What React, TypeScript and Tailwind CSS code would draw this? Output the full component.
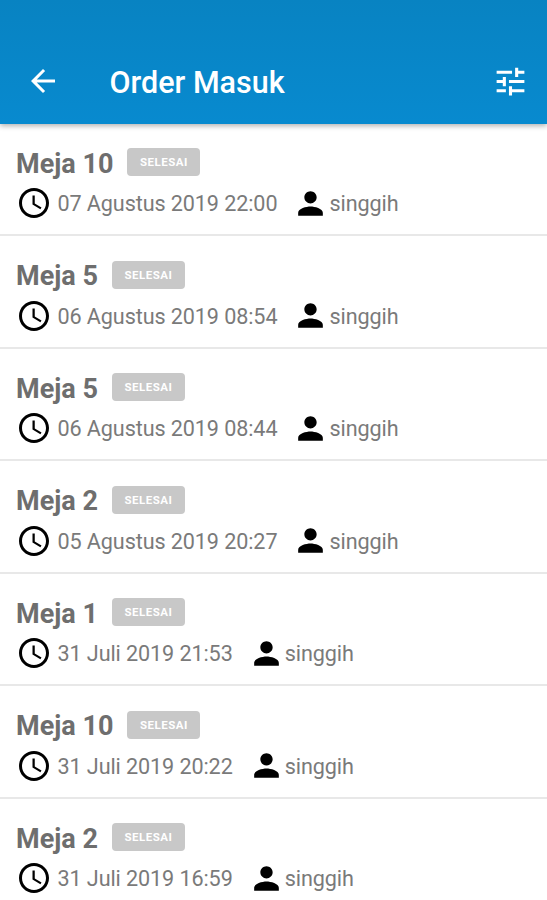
type Order = { table: string; date: string; user: string };

const orders: Order[] = [
  { table: "Meja 10", date: "07 Agustus 2019 22:00", user: "singgih" },
  { table: "Meja 5", date: "06 Agustus 2019 08:54", user: "singgih" },
  { table: "Meja 5", date: "06 Agustus 2019 08:44", user: "singgih" },
  { table: "Meja 2", date: "05 Agustus 2019 20:27", user: "singgih" },
  { table: "Meja 1", date: "31 Juli 2019 21:53", user: "singgih" },
  { table: "Meja 10", date: "31 Juli 2019 20:22", user: "singgih" },
  { table: "Meja 2", date: "31 Juli 2019 16:59", user: "singgih" },
];

function Icon({ d, className }: { d: string; className: string }) {
  return (
    <svg viewBox="0 0 24 24" fill="currentColor" className={className} aria-hidden="true">
      <path d={d} />
    </svg>
  );
}

const BACK = "M20 11H7.83l5.59-5.59L12 4l-8 8 8 8 1.41-1.41L7.83 13H20v-2z";
const TUNE =
  "M3 17v2h6v-2H3zM3 5v2h10V5H3zm10 16v-2h8v-2h-8v-2h-2v6h2zM7 9v2H3v2h4v2h2V9H7zm14 4v-2H11v2h10zm-6-4h2V7h4V5h-4V3h-2v6z";
const CLOCK =
  "M11.99 2C6.47 2 2 6.48 2 12s4.47 10 9.99 10C17.52 22 22 17.52 22 12S17.52 2 11.99 2zM12 20c-4.42 0-8-3.58-8-8s3.58-8 8-8 8 3.58 8 8-3.58 8-8 8zm.5-13H11v6l5.25 3.15.75-1.23-4.5-2.67z";
const PERSON =
  "M12 12c2.21 0 4-1.79 4-4s-1.79-4-4-4-4 1.79-4 4 1.79 4 4 4zm0 2c-2.67 0-8 1.34-8 4v2h16v-2c0-2.66-5.33-4-8-4z";

function OrderRow({ table, date, user }: Order) {
  return (
    <li className="h-[112.5px] border-b-2 border-[#e8e8e8] px-4 pt-[24.6px]">
      <div className="flex h-7 items-center">
        <span className="pt-[3px] text-[27px] leading-7 font-bold text-[#6e6e6e]">{table}</span>
        <span className="ml-3.5 flex h-7 w-[73px] items-center justify-center rounded-[4px] bg-[#c8c8c8] pt-[2px] text-[11.5px] font-bold tracking-[0.5px] text-white">
          SELESAI
        </span>
      </div>
      <div className="mt-[9px] flex h-9 items-center text-[21.6px] tracking-[-0.1px] text-[#7a7a7a]">
        <Icon d={CLOCK} className="size-9 shrink-0 text-black" />
        <span className="ml-[5.5px] pt-[3px] whitespace-nowrap">{date}</span>
        <Icon d={PERSON} className="ml-[15px] size-[37px] shrink-0 text-black" />
        <span className="pt-[3px]">{user}</span>
      </div>
    </li>
  );
}

export default function App() {
  return (
    <div className="h-[900px] overflow-hidden bg-white font-['Roboto',sans-serif]">
      <header className="relative flex h-[123.5px] items-center bg-linear-to-b from-[#0883c2] to-[#088acf] pt-[38.5px] pr-[18px] pl-[25px] text-white shadow-[0_2px_5px_rgba(0,0,0,0.3)]">
        <Icon d={BACK} className="size-9" />
        <h1 className="ml-[48.5px] pt-[4px] text-[30.5px] font-medium">Order Masuk</h1>
        <Icon d={TUNE} className="ml-auto size-[37px]" />
      </header>
      <ul>
        {orders.map((order, i) => (
          <OrderRow key={i} {...order} />
        ))}
      </ul>
    </div>
  );
}
